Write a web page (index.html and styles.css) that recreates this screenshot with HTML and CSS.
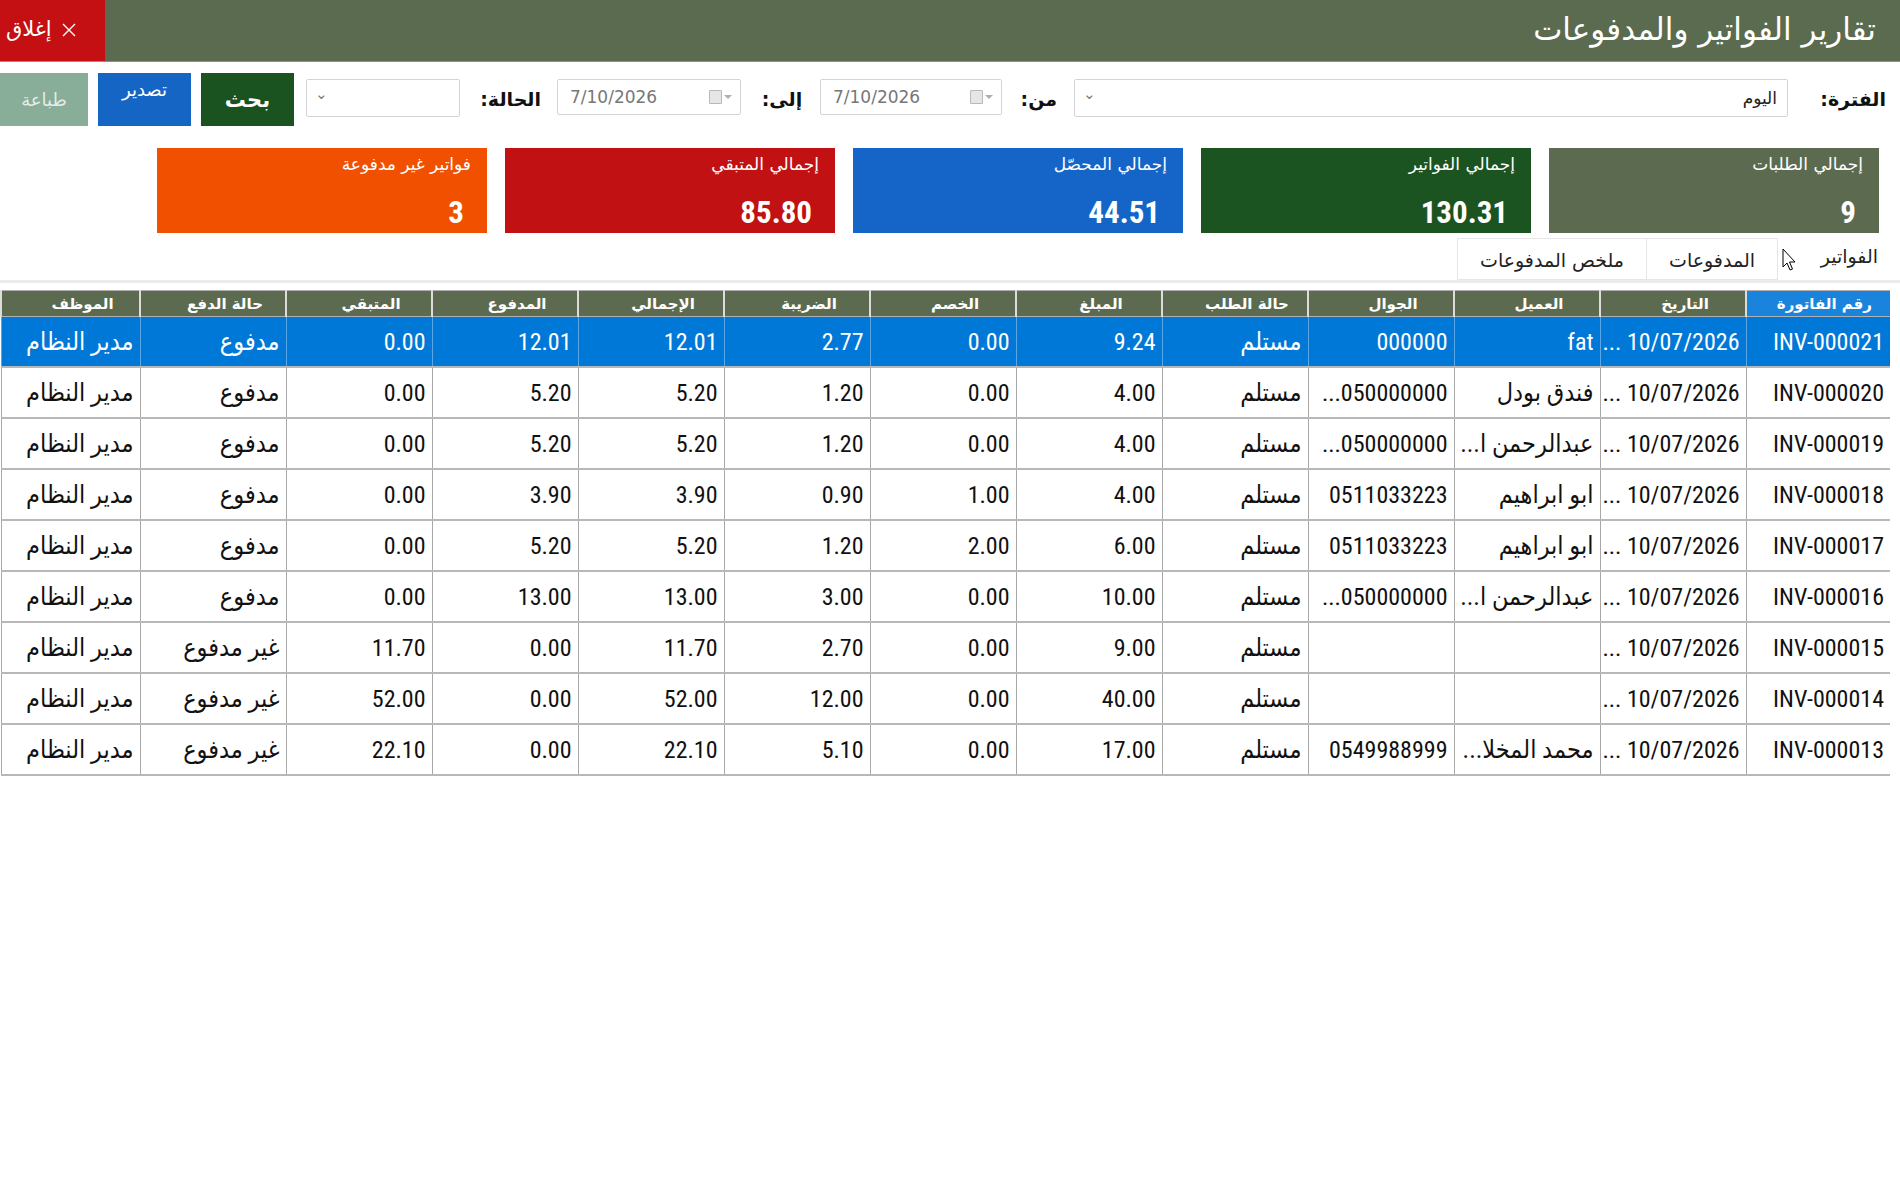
FILE: index.html
```html
<!DOCTYPE html>
<html lang="ar" dir="rtl">
<head>
    <meta charset="UTF-8">
    <title>تقارير الفواتير والمدفوعات</title>
    <link rel="stylesheet" href="styles.css">
</head>
<body>

    <header class="topbar">
        <h1 class="title">تقارير الفواتير والمدفوعات</h1>
        <button class="close-btn">
            <svg class="x" width="14" height="14" viewBox="0 0 14 14"><path d="M1 1 L13 13 M13 1 L1 13" stroke="#fff" stroke-width="1.4" fill="none"/></svg>
            إغلاق
        </button>
    </header>

    <div class="toolbar">
        <label class="lbl lbl-period">الفترة:</label>
        <div class="combo combo-period"><span>اليوم</span><span class="chev">⌄</span></div>
        <label class="lbl lbl-from">من:</label>
        <div class="date date-from">
            <span class="date-text">7/10/2026</span>
            <span class="cal"><span class="cal-box"></span><span class="tri"></span></span>
        </div>
        <label class="lbl lbl-to">إلى:</label>
        <div class="date date-to">
            <span class="date-text">7/10/2026</span>
            <span class="cal"><span class="cal-box"></span><span class="tri"></span></span>
        </div>
        <label class="lbl lbl-status">الحالة:</label>
        <div class="combo combo-status"><span></span><span class="chev">⌄</span></div>
        <button class="btn btn-search">بحث</button>
        <button class="btn btn-export">تصدير</button>
        <button class="btn btn-print">طباعة</button>
    </div>

    <div class="cards">
        <div class="card c-olive"><div class="card-label">إجمالي الطلبات</div><div class="card-value">9</div></div>
        <div class="card c-green"><div class="card-label">إجمالي الفواتير</div><div class="card-value">130.31</div></div>
        <div class="card c-blue"><div class="card-label">إجمالي المحصّل</div><div class="card-value">44.51</div></div>
        <div class="card c-red"><div class="card-label">إجمالي المتبقي</div><div class="card-value">85.80</div></div>
        <div class="card c-orange"><div class="card-label">فواتير غير مدفوعة</div><div class="card-value">3</div></div>
    </div>

    <div class="tabs">
        <div class="tab active">الفواتير</div>
        <div class="tab">المدفوعات</div>
        <div class="tab">ملخص المدفوعات</div>
    </div>

    <div class="panel">
        <table class="grid">
            <colgroup>
                <col style="width:144px"><col style="width:146px"><col style="width:146px"><col style="width:146px">
                <col style="width:146px"><col style="width:146px"><col style="width:146px"><col style="width:146px">
                <col style="width:146px"><col style="width:146px"><col style="width:146px"><col style="width:146px">
                <col style="width:139px">
            </colgroup>
            <thead>
                <tr>
                    <th class="sel-col">رقم الفاتورة</th>
                    <th>التاريخ</th>
                    <th>العميل</th>
                    <th>الجوال</th>
                    <th>حالة الطلب</th>
                    <th>المبلغ</th>
                    <th>الخصم</th>
                    <th>الضريبة</th>
                    <th>الإجمالي</th>
                    <th>المدفوع</th>
                    <th>المتبقي</th>
                    <th>حالة الدفع</th>
                    <th>الموظف</th>
                </tr>
            </thead>
            <tbody>
                <tr class="selected">
                    <td>INV-000021</td><td>10/07/2026 ...</td><td>fat</td><td>000000</td><td class="ar">مستلم</td>
                    <td>9.24</td><td>0.00</td><td>2.77</td><td>12.01</td><td>12.01</td><td>0.00</td><td class="ar">مدفوع</td><td class="ar">مدير النظام</td>
                </tr>
                <tr>
                    <td>INV-000020</td><td>10/07/2026 ...</td><td class="ar">فندق بودل</td><td>050000000...</td><td class="ar">مستلم</td>
                    <td>4.00</td><td>0.00</td><td>1.20</td><td>5.20</td><td>5.20</td><td>0.00</td><td class="ar">مدفوع</td><td class="ar">مدير النظام</td>
                </tr>
                <tr>
                    <td>INV-000019</td><td>10/07/2026 ...</td><td class="ar">عبدالرحمن ا...</td><td>050000000...</td><td class="ar">مستلم</td>
                    <td>4.00</td><td>0.00</td><td>1.20</td><td>5.20</td><td>5.20</td><td>0.00</td><td class="ar">مدفوع</td><td class="ar">مدير النظام</td>
                </tr>
                <tr>
                    <td>INV-000018</td><td>10/07/2026 ...</td><td class="ar">ابو ابراهيم</td><td>0511033223</td><td class="ar">مستلم</td>
                    <td>4.00</td><td>1.00</td><td>0.90</td><td>3.90</td><td>3.90</td><td>0.00</td><td class="ar">مدفوع</td><td class="ar">مدير النظام</td>
                </tr>
                <tr>
                    <td>INV-000017</td><td>10/07/2026 ...</td><td class="ar">ابو ابراهيم</td><td>0511033223</td><td class="ar">مستلم</td>
                    <td>6.00</td><td>2.00</td><td>1.20</td><td>5.20</td><td>5.20</td><td>0.00</td><td class="ar">مدفوع</td><td class="ar">مدير النظام</td>
                </tr>
                <tr>
                    <td>INV-000016</td><td>10/07/2026 ...</td><td class="ar">عبدالرحمن ا...</td><td>050000000...</td><td class="ar">مستلم</td>
                    <td>10.00</td><td>0.00</td><td>3.00</td><td>13.00</td><td>13.00</td><td>0.00</td><td class="ar">مدفوع</td><td class="ar">مدير النظام</td>
                </tr>
                <tr>
                    <td>INV-000015</td><td>10/07/2026 ...</td><td></td><td></td><td class="ar">مستلم</td>
                    <td>9.00</td><td>0.00</td><td>2.70</td><td>11.70</td><td>0.00</td><td>11.70</td><td class="ar">غير مدفوع</td><td class="ar">مدير النظام</td>
                </tr>
                <tr>
                    <td>INV-000014</td><td>10/07/2026 ...</td><td></td><td></td><td class="ar">مستلم</td>
                    <td>40.00</td><td>0.00</td><td>12.00</td><td>52.00</td><td>0.00</td><td>52.00</td><td class="ar">غير مدفوع</td><td class="ar">مدير النظام</td>
                </tr>
                <tr>
                    <td>INV-000013</td><td>10/07/2026 ...</td><td class="ar">محمد المخلا...</td><td>0549988999</td><td class="ar">مستلم</td>
                    <td>17.00</td><td>0.00</td><td>5.10</td><td>22.10</td><td>0.00</td><td>22.10</td><td class="ar">غير مدفوع</td><td class="ar">مدير النظام</td>
                </tr>
            </tbody>
        </table>
    </div>

    <svg class="cursor" width="14" height="24" viewBox="0 0 14 24">
        <path d="M1 1 L1 19 L5 15 L8 22 L10.5 21 L7.5 14 L13 14 Z" fill="#fff" stroke="#000" stroke-width="1" stroke-linejoin="round"/>
    </svg>

</body>
</html>
```

FILE: styles.css
```css
body {
    margin: 0;
    width: 1900px;
    background: #fff;
    font-family: "DejaVu Sans", "Noto Sans", sans-serif;
    position: relative;
}

/* header */
.topbar {
    height: 62px;
    background-color: #5b6b4f;
    display: flex;
    justify-content: space-between;
    align-items: stretch;
    border-bottom: 1px solid #8b9384;
    box-sizing: border-box;
}
.title {
    margin: 0;
    padding-right: 24px;
    color: #fff;
    font-size: 31px;
    font-weight: normal;
    line-height: 58px;
}
.close-btn {
    width: 105px;
    border: none;
    background-color: #c40f13;
    color: #fff;
    font-family: inherit;
    font-size: 21px;
    padding: 0 0 4px 6px;
    display: flex;
    align-items: center;
    justify-content: flex-end;
    gap: 10px;
}
.close-btn .x {
    margin-top: 3px;
}

/* filter row */
.toolbar {
    display: flex;
    align-items: center;
    height: 53px;
    margin-top: 11px;
    padding-right: 14px;
}
.toolbar > * {
    flex-shrink: 0;
}
.lbl {
    font-weight: bold;
    font-size: 19px;
    color: #111;
    text-align: center;
    padding-bottom: 2px;
    white-space: nowrap;
}
.lbl-period { width: 63px; margin-left: 35px; }
.lbl-from { width: 36px; margin-left: 19px; }
.lbl-to { width: 42px; margin-left: 20px; }
.lbl-status { width: 59px; margin-left: 22px; }

.combo {
    height: 38px;
    border: 1px solid #d4d4d4;
    border-radius: 2px;
    box-sizing: border-box;
    display: flex;
    justify-content: space-between;
    align-items: center;
    padding: 0 10px 0 8px;
    font-size: 17px;
    color: #222;
    margin-top: -4px;
}
.combo .chev {
    color: #777;
    font-size: 15px;
    margin-top: -8px;
}
.combo-period { width: 714px; margin-left: 17px; }
.combo-status { width: 154px; margin-left: 12px; }

.date {
    height: 36px;
    border: 1px solid #d4d4d4;
    border-radius: 2px;
    box-sizing: border-box;
    display: flex;
    direction: ltr;
    justify-content: space-between;
    align-items: center;
    padding: 0 8px 0 12px;
    color: #777;
    font-size: 17px;
    margin-top: -5px;
}
.date-from { width: 182px; margin-left: 17px; }
.date-to { width: 184px; margin-left: 16px; }
.cal {
    display: flex;
    align-items: center;
    gap: 2px;
}
.cal-box {
    width: 11px;
    height: 12px;
    border: 1px solid #b8b8b8;
    background: #e6e6e6;
    border-radius: 1px;
}
.tri {
    width: 0;
    height: 0;
    border-left: 4px solid transparent;
    border-right: 4px solid transparent;
    border-top: 4px solid #b0b0b0;
}

.btn {
    height: 53px;
    border: none;
    color: #fff;
    font-family: inherit;
    font-size: 18px;
    padding: 0;
}
.btn-search {
    width: 93px;
    margin-left: 10px;
    background-color: #1a5320;
    font-weight: bold;
    font-size: 21px;
}
.btn-export {
    width: 93px;
    margin-left: 10px;
    background-color: #1565c4;
    padding-bottom: 20px;
}
.btn-print {
    width: 88px;
    background-color: #88ad98;
    color: #e4ece6;
}

/* summary cards */
.cards {
    display: flex;
    gap: 18px;
    margin-top: 22px;
    padding-right: 21px;
}
.card {
    width: 330px;
    height: 85px;
    box-sizing: border-box;
    padding: 6px 16px 2px 16px;
    color: #fff;
    display: flex;
    flex-direction: column;
    justify-content: space-between;
}
.card-label {
    font-size: 17px;
}
.card-value {
    font-family: "Roboto Condensed", "Liberation Sans Narrow", "DejaVu Sans Condensed", sans-serif;
    font-size: 31px;
    font-weight: bold;
    padding-right: 7px;
}
.c-olive { background-color: #5c6b50; }
.c-green { background-color: #1b5420; }
.c-blue { background-color: #1565c8; }
.c-red { background-color: #c21113; }
.c-orange { background-color: #f05000; }

/* tabs */
.tabs {
    display: flex;
    margin-top: 5px;
    padding-right: 10px;
    height: 42px;
}
.tab {
    height: 42px;
    box-sizing: border-box;
    border: 1px solid #e6e6e6;
    border-right: none;
    font-size: 19px;
    color: #222;
    display: flex;
    align-items: center;
    justify-content: center;
    padding-top: 2px;
}
.tab:nth-child(2) { width: 132px; border-right: 1px solid #e6e6e6; }
.tab:nth-child(3) { width: 189px; }
.tab.active {
    width: 112px;
    border: none;
    font-size: 19px;
    padding-top: 0;
    padding-bottom: 6px;
    justify-content: flex-start;
    padding-right: 12px;
}

/* data grid */
.panel {
    border-top: 3px solid #ececec;
    padding-top: 7px;
}
.grid {
    width: 1890px;
    margin-right: 10px;
    border-collapse: collapse;
    table-layout: fixed;
    font-family: "Roboto Condensed", "Liberation Sans Narrow", "DejaVu Sans Condensed", sans-serif;
}
.grid th {
    height: 25px;
    padding: 0 0 0 24px;
    background-color: #5c6b50;
    color: #fff;
    font-size: 15px;
    font-weight: bold;
    font-family: "DejaVu Sans", sans-serif;
    border-left: 2px solid #dcdcdc;
    border-top: 1px solid #b0b0b0;
    border-bottom: 1px solid #b0b0b0;
    white-space: nowrap;
    overflow: hidden;
}
.grid th.sel-col {
    background-color: #1a83dc;
    text-align: right;
    padding-right: 18px;
}
.grid td {
    height: 49px;
    padding: 0 6px;
    text-align: right;
    font-size: 24px;
    color: #111;
    border-left: 1px solid #a8a8a8;
    border-bottom: 2px solid #b8b8b8;
    white-space: nowrap;
    overflow: hidden;
}
.grid td.ar {
    font-size: 25px;
}
.grid tr.selected td {
    background-color: #0078d7;
    color: #fff;
    border-left-color: #5aa6e6;
}

.cursor {
    position: absolute;
    left: 1782px;
    top: 248px;
}
```
